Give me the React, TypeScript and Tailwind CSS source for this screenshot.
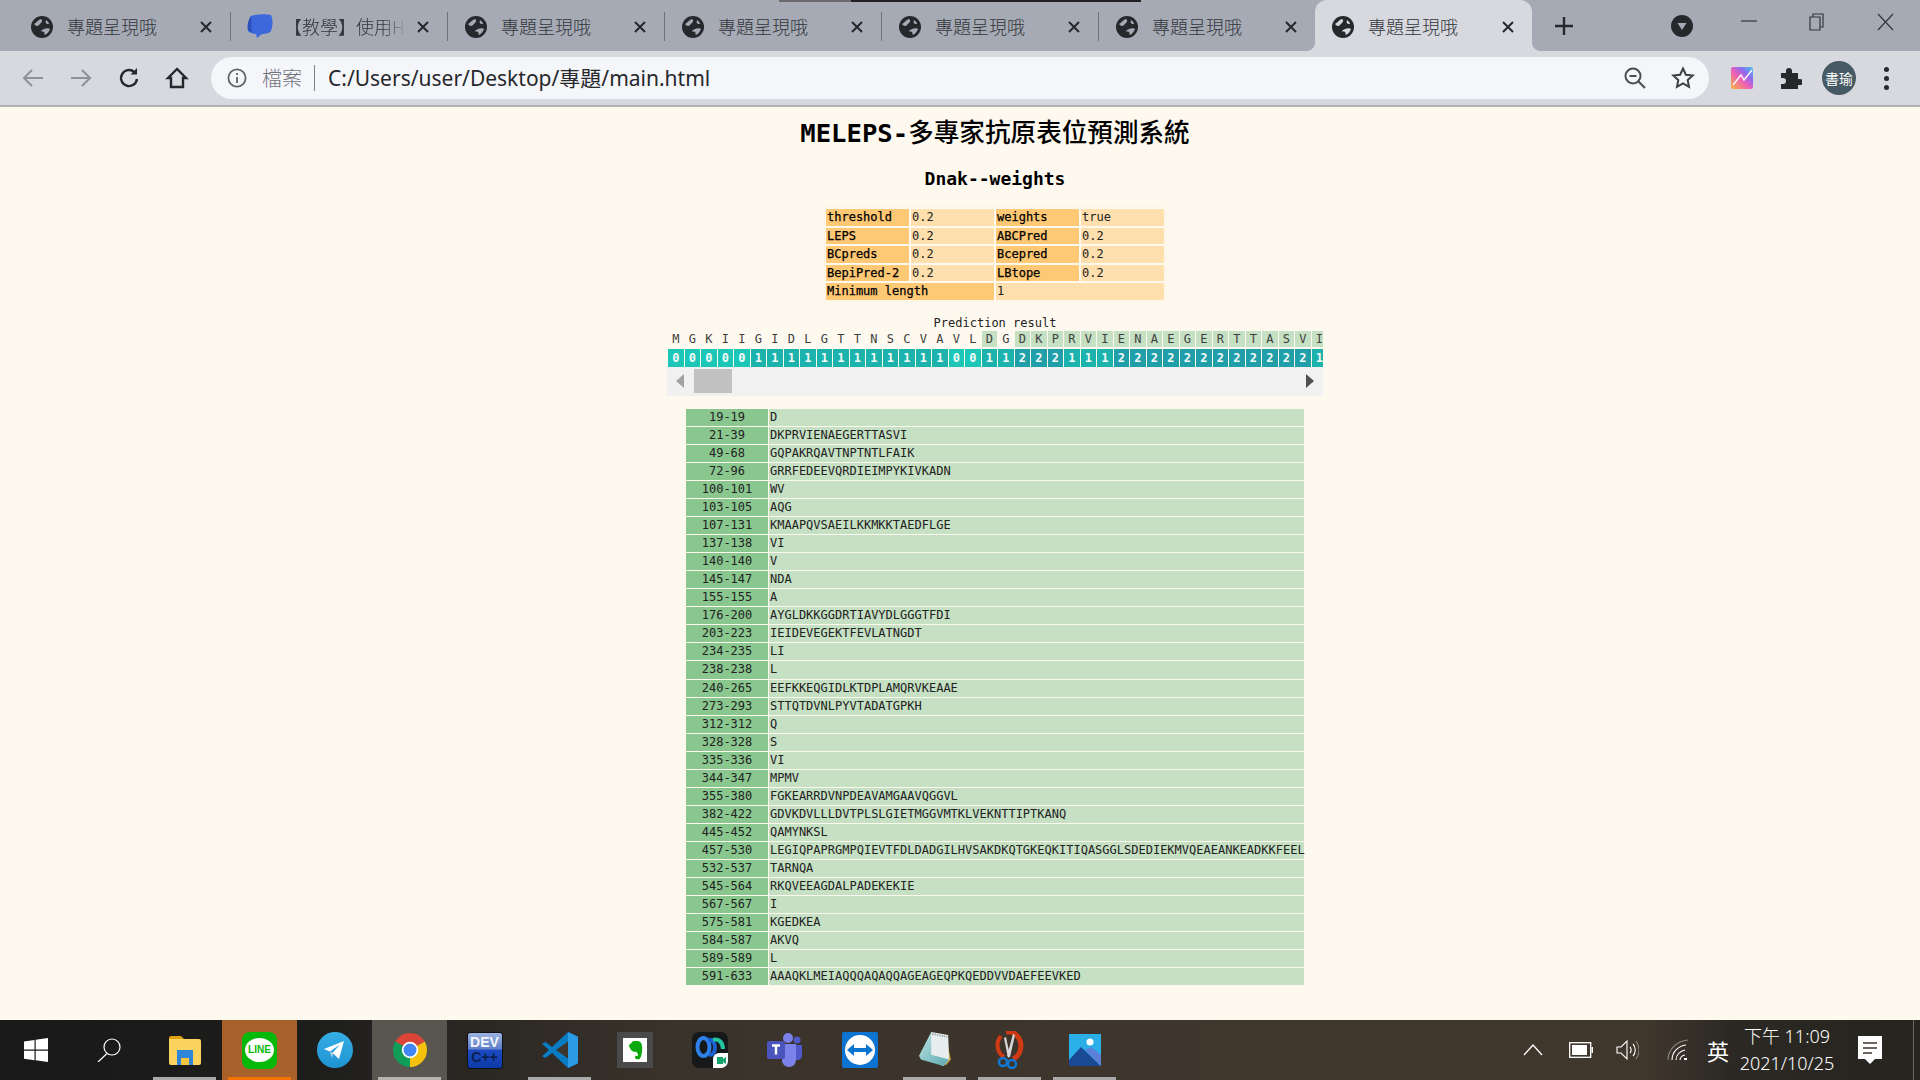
import React from "react";

const SEQ = "MGKIIGIDLGTTNSCVAVLDGDKPRVIENAEGERTTASVI".split("");
const SCORES = "0000011111111111100112221112222222222221".split("");
const GREEN = new Set([19, ...Array.from({ length: 19 }, (_, i) => i + 21)]);
const ROWS: [string, string][] = [
  ["19-19", "D"], ["21-39", "DKPRVIENAEGERTTASVI"], ["49-68", "GQPAKRQAVTNPTNTLFAIK"], ["72-96", "GRRFEDEEVQRDIEIMPYKIVKADN"],
  ["100-101", "WV"], ["103-105", "AQG"], ["107-131", "KMAAPQVSAEILKKMKKTAEDFLGE"], ["137-138", "VI"], ["140-140", "V"],
  ["145-147", "NDA"], ["155-155", "A"], ["176-200", "AYGLDKKGGDRTIAVYDLGGGTFDI"], ["203-223", "IEIDEVEGEKTFEVLATNGDT"],
  ["234-235", "LI"], ["238-238", "L"], ["240-265", "EEFKKEQGIDLKTDPLAMQRVKEAAE"], ["273-293", "STTQTDVNLPYVTADATGPKH"],
  ["312-312", "Q"], ["328-328", "S"], ["335-336", "VI"], ["344-347", "MPMV"], ["355-380", "FGKEARRDVNPDEAVAMGAAVQGGVL"],
  ["382-422", "GDVKDVLLLDVTPLSLGIETMGGVMTKLVEKNTTIPTKANQ"], ["445-452", "QAMYNKSL"],
  ["457-530", "LEGIQPAPRGMPQIEVTFDLDADGILHVSAKDKQTGKEQKITIQASGGLSDEDIEKMVQEAEANKEADKKFEEL"], ["532-537", "TARNQA"],
  ["545-564", "RKQVEEAGDALPADEKEKIE"], ["567-567", "I"], ["575-581", "KGEDKEA"], ["584-587", "AKVQ"], ["589-589", "L"],
  ["591-633", "AAAQKLMEIAQQQAQAQQAGEAGEQPKQEDDVVDAEFEEVKED"],
];
const PARAMS = [
  ["threshold", "0.2", "weights", "true"],
  ["LEPS", "0.2", "ABCPred", "0.2"],
  ["BCpreds", "0.2", "Bcepred", "0.2"],
  ["BepiPred-2", "0.2", "LBtope", "0.2"],
];

function Globe({ active }: { active?: boolean }) {
  return (
    <svg viewBox="0 0 22 22" className="w-[22px] h-[22px] shrink-0">
      <circle cx="11" cy="11" r="11" fill="#26282c" />
      <path d="M3 8c2-1 4-4 7-5 2 1 1 3 0 4-2 1-2 3-4 3-1 0-2-1-3-2zM13 13c2-1 5-1 6 0-1 3-3 5-5 6-1-1 0-2-1-3-1-1-3 0-3-1 0-1 2-1 3-2zM15 4c1 1 3 2 3 4-1 0-3 0-3-1-1-1 0-2 0-3z" fill={active ? "#d8d9df" : "#a6aab5"} />
    </svg>
  );
}
function CloseX() {
  return (
    <svg viewBox="0 0 14 14" className="w-[14px] h-[14px] shrink-0">
      <path d="M2 2l10 10M12 2L2 12" stroke="#26282c" strokeWidth="2" />
    </svg>
  );
}
function Bubble() {
  return (
    <svg viewBox="0 0 26 25" className="w-[26px] h-[25px] shrink-0 ml-[-1px] mr-[-3px]">
      <path d="M4 2c6-2 15-2 20-1 2 4 2 11 0 16-1 2-5 3-9 3l-5 4-1-4c-3 0-6-1-8-3C0 12 1 6 4 2z" fill="#3c68dc" />
      <path d="M1 16C0 10 2 6 4 2c1 4 0 11 1 16-2 0-3-1-4-2z" fill="#2b50ba" />
    </svg>
  );
}
function Tab({ title, bubble, sep, fade }: { title: string; bubble?: boolean; sep?: boolean; fade?: boolean }) {
  return (
    <>
      <div className="w-[216px] h-[51px] pt-[2px] pl-[17px] pr-[17px] flex items-center shrink-0">
        {bubble ? <Bubble /> : <Globe />}
        <div className={`flex-1 min-w-0 ml-[14px] mr-[9px] mb-[2px] overflow-hidden whitespace-nowrap text-[18px] leading-[24px] text-[#33363c] font-light ${fade ? "[mask-image:linear-gradient(to_right,black_80%,transparent)]" : ""}`}>
          {title}
        </div>
        <CloseX />
      </div>
      {sep ? <div className="w-px h-[29px] mt-[12px] bg-[#6f727b] shrink-0" /> : null}
    </>
  );
}

function TabBar() {
  return (
    <div className="relative h-[51px] bg-[#a6aab5] flex pl-[14px] font-['Noto_Sans_CJK_TC','Noto_Sans',sans-serif]">
      <div className="absolute top-0 left-[779px] w-[72px] h-[2px] bg-[#6b6b6e]" />
      <div className="absolute top-0 left-[851px] w-[290px] h-[2px] bg-[#222225]" />
      <Tab title="專題呈現哦" sep />
      <Tab title="【教學】使用HTML" bubble sep fade />
      <Tab title="專題呈現哦" sep />
      <Tab title="專題呈現哦" sep />
      <Tab title="專題呈現哦" sep />
      <Tab title="專題呈現哦" />
      <div className="relative w-[217px] h-[51px] pt-[2px] pl-[17px] pr-[17px] flex items-center shrink-0 bg-[#d8d9df] rounded-t-[12px]">
        <svg viewBox="0 0 8 8" className="absolute bottom-0 left-[-8px] w-[8px] h-[8px]"><path d="M8 0v8H0c4 0 8-4 8-8z" fill="#d8d9df" /></svg>
        <svg viewBox="0 0 8 8" className="absolute bottom-0 right-[-8px] w-[8px] h-[8px]"><path d="M0 0v8h8C4 8 0 4 0 0z" fill="#d8d9df" /></svg>
        <Globe active />
        <div className="flex-1 ml-[14px] mb-[2px] text-[18px] leading-[24px] text-[#33363c] font-light whitespace-nowrap">專題呈現哦</div>
        <CloseX />
      </div>
      <svg viewBox="0 0 20 20" className="w-[20px] h-[20px] ml-[22px] mt-[16px] shrink-0">
        <path d="M10 1v18M1 10h18" stroke="#26282c" strokeWidth="2.4" />
      </svg>
      <div className="flex-1" />
      <svg viewBox="0 0 22 22" className="w-[22px] h-[22px] mt-[15px] mr-[22px] shrink-0">
        <circle cx="11" cy="11" r="11" fill="#26282c" />
        <path d="M6.5 8h9L11 15z" fill="#a6aab5" />
      </svg>
      {[
        <path key="a" d="M0 8h16" stroke="#33363c" strokeWidth="1.2" />,
        <g key="b" fill="none" stroke="#33363c" strokeWidth="1.2"><path d="M1 4h10v13H1z" /><path d="M4 4V1h10v13h-3" /></g>,
        <path key="c" d="M1 1l15 16M16 1L1 17" stroke="#33363c" strokeWidth="1.2" fill="none" />,
      ].map((p, i) => (
        <div key={i} className="w-[68px] h-[44px] flex items-center justify-center shrink-0">
          <svg viewBox="0 0 17 18" className="w-[17px] h-[18px]">{p}</svg>
        </div>
      ))}
      <div className="w-px" />
    </div>
  );
}

function ToolBtn({ children }: { children: React.ReactNode }) {
  return <div className="w-[48px] h-[42px] flex items-center justify-center shrink-0">{children}</div>;
}

function Toolbar() {
  return (
    <div className="h-[56px] bg-[#d8d9df] border-b-2 border-[#b0b1b6] flex items-center pl-[9px] font-['Noto_Sans','Noto_Sans_CJK_TC',sans-serif]">
      <ToolBtn><svg viewBox="0 0 24 24" className="w-[24px] h-[24px]" fill="none" stroke="#8f9196" strokeWidth="2"><path d="M22 12H3M11 4l-8 8 8 8" /></svg></ToolBtn>
      <ToolBtn><svg viewBox="0 0 24 24" className="w-[24px] h-[24px]" fill="none" stroke="#8f9196" strokeWidth="2"><path d="M2 12h19M13 4l8 8-8 8" /></svg></ToolBtn>
      <ToolBtn><svg viewBox="0 0 24 24" className="w-[24px] h-[24px]" fill="none" stroke="#26282c" strokeWidth="2.4"><path d="M20 13a8 8 0 1 1-2.600-6.900" /><path d="M20 2v6.500h-6.500" fill="#26282c" stroke="none" /></svg></ToolBtn>
      <ToolBtn><svg viewBox="0 0 24 24" className="w-[24px] h-[24px]" fill="none" stroke="#26282c" strokeWidth="2.4"><path d="M12 3L3 12h3v9h12v-9h3z" /></svg></ToolBtn>
      <div className="w-[1498px] ml-[10px] h-[42px] rounded-full bg-[#f5f6fa] flex items-center pl-[16px] pr-[14px]">
        <svg viewBox="0 0 20 20" className="w-[20px] h-[20px] shrink-0" fill="none" stroke="#5f6368" strokeWidth="1.8">
          <circle cx="10" cy="10" r="8.600" /><path d="M10 9v6M10 5v2" />
        </svg>
        <span className="ml-[15px] text-[20px] leading-[26px] text-[#70737a] font-light font-['Noto_Sans_CJK_TC',sans-serif]">檔案</span>
        <div className="w-px h-[26px] bg-[#7d8086] ml-[12px] mr-[13px]" />
        <span className="text-[21px] leading-[26px] text-[#26282c] whitespace-nowrap">C:/Users/user/Desktop/專題/main.html</span>
        <div className="flex-1" />
        <svg viewBox="0 0 24 24" className="w-[24px] h-[24px] shrink-0 mr-[24px]" fill="none" stroke="#4a4d52" strokeWidth="2">
          <circle cx="10" cy="10" r="7.500" /><path d="M15.500 15.500L22 22M6.500 10h7" />
        </svg>
        <svg viewBox="0 0 24 24" className="w-[24px] h-[24px] shrink-0" fill="none" stroke="#3c3f44" strokeWidth="2">
          <path d="M12 2.500l2.900 6.200 6.800.8-5 4.600 1.300 6.700-6-3.400-6 3.400 1.300-6.700-5-4.600 6.800-.8z" />
        </svg>
      </div>
      <div className="w-[21px]" />
      <svg viewBox="0 0 24 24" className="w-[24px] h-[24px] shrink-0 mr-[24px]">
        <defs><linearGradient id="ext" x1="0" y1="1" x2="1" y2="0"><stop offset="0" stopColor="#f7b13a" /><stop offset="0.45" stopColor="#ef5fb8" /><stop offset="0.7" stopColor="#8a6cf0" /><stop offset="1" stopColor="#45c8e8" /></linearGradient></defs>
        <rect x="1" y="1" width="22" height="22" rx="2" fill="url(#ext)" />
        <path d="M3 19L11 9l3 5 8-10" stroke="#fff" strokeWidth="1.300" fill="none" />
      </svg>
      <svg viewBox="0 0 24 24" className="w-[24px] h-[24px] shrink-0 mr-[20px]">
        <path d="M3 7h5V5a3 3 0 0 1 6 0v2h6v6h2a3 3 0 0 1 0 6h-2v4H3v-5h2a3 3 0 0 0 0-6H3z" fill="#26282c" />
      </svg>
      <div className="w-[34px] h-[34px] rounded-full bg-[#455a64] shrink-0 flex items-center justify-center text-white text-[14px] leading-none whitespace-nowrap font-['Noto_Sans_CJK_TC',sans-serif]">書瑜</div>
      <div className="ml-[28px] flex flex-col gap-[4px]">
        <div className="w-[5px] h-[5px] rounded-full bg-[#26282c]" />
        <div className="w-[5px] h-[5px] rounded-full bg-[#26282c]" />
        <div className="w-[5px] h-[5px] rounded-full bg-[#26282c]" />
      </div>
    </div>
  );
}

function Page() {
  return (
    <div className="flex-1 min-h-0 overflow-hidden bg-[#fef9ef] pl-[70px] flex flex-col items-center text-[12px] leading-[16px] text-[#222] font-['DejaVu_Sans_Mono','Noto_Sans_CJK_TC',monospace]">
      <div className="h-[51px] flex items-center text-[25.6px] text-black whitespace-nowrap">
        <span className="font-bold">MELEPS-</span>
        <span className="font-medium">多專家抗原表位預測系統</span>
      </div>
      <div className="h-[42px] flex items-center text-[18px] font-bold text-black whitespace-nowrap">Dnak--weights</div>
      <div className="mt-[7px] w-[342px] p-px border border-[#fff4e2] flex flex-col gap-[2px]">
        {PARAMS.map((r, i) => (
          <div key={i} className="grid grid-cols-4 gap-[2px] h-[16.6px]">
            {r.map((c, j) => (
              <div key={j} className={`pl-px leading-[16.6px] ${j % 2 === 0 ? "bg-[#ffc875] text-black [-webkit-text-stroke:0.25px_black]" : "bg-[#ffdfad] text-[#222]"}`}>{c}</div>
            ))}
          </div>
        ))}
        <div className="grid grid-cols-2 gap-[2px] h-[16.6px]">
          <div className="pl-px leading-[16.6px] bg-[#ffc875] text-black [-webkit-text-stroke:0.25px_black]">Minimum length</div>
          <div className="pl-px leading-[16.6px] bg-[#ffdfad] text-[#222]">1</div>
        </div>
      </div>
      <div className="mt-[13px] h-[16px] text-center whitespace-nowrap">Prediction result</div>
      <div className="w-[656px] overflow-hidden">
        <div className="flex gap-px h-[16px] pl-px">
          {SEQ.map((c, i) => (
            <div key={i} className={`w-[15.5px] shrink-0 text-center leading-[16px] text-[#3f3f3f] ${GREEN.has(i) ? "bg-[#c6e0c3]" : ""}`}>{c}</div>
          ))}
        </div>
        <div className="flex gap-px h-[18px] mt-[2px] pl-px">
          {SCORES.map((c, i) => (
            <div key={i} className={`w-[15.5px] shrink-0 text-center leading-[18px] font-bold text-[#f4fbfa] ${c === "0" ? "bg-[#1cc7b7]" : c === "1" ? "bg-[#1bb3ab]" : "bg-[#209fa9]"}`}>{c}</div>
          ))}
        </div>
        <div className="h-[29px] bg-[#f1f1f1] flex items-center pl-[9px] pr-[9px]">
          <svg viewBox="0 0 8 14" className="w-[8px] h-[14px] shrink-0"><path d="M8 0v14L0 7z" fill="#a3a3a3" /></svg>
          <div className="ml-[10px] w-[38px] h-[24px] bg-[#c1c1c1]" />
          <div className="flex-1" />
          <svg viewBox="0 0 8 14" className="w-[8px] h-[14px] shrink-0"><path d="M0 0v14l8-7z" fill="#505050" /></svg>
        </div>
      </div>
      <div className="mt-[13.3px] w-[618px] flex flex-col gap-px">
        {ROWS.map(([a, b]) => (
          <div key={a} className="flex gap-px h-[17.03px]">
            <div className="w-[82px] shrink-0 bg-[#8ac78f] text-center leading-[17px]">{a}</div>
            <div className="flex-1 min-w-0 bg-[#c6e0c3] pl-px leading-[17px] whitespace-nowrap">{b}</div>
          </div>
        ))}
      </div>
    </div>
  );
}

const Task = ({ children, w = "w-[75px]", bar, bg }: { children: React.ReactNode; w?: string; bar?: string; bg?: string }) => (
  <div className={`relative ${w} h-[60px] flex items-center justify-center shrink-0 ${bg || ""}`}>
    {children}
    {bar ? <div className={`absolute bottom-0 left-[6px] right-[6px] h-[3px] ${bar}`} /> : null}
  </div>
);

function Taskbar() {
  return (
    <div className="h-[60px] flex bg-[linear-gradient(to_right,#191919_0%,#1d1d1c_16%,#3a332b_35%,#40372d_70%,#3f362c_86%,#2c2925_90%,#26241f_100%)] text-white font-['Noto_Sans','Noto_Sans_CJK_TC',sans-serif]">
      <Task w="w-[71px]">
        <svg viewBox="0 0 24 24" className="w-[24px] h-[24px]"><path d="M0 3.500l10.500-1.500v9.500H0zM11.700 1.800L24 0v11.500H11.700zM0 12.700h10.500v9.500L0 20.700zM11.700 12.700H24V24l-12.300-1.800z" fill="#fff" /></svg>
      </Task>
      <Task w="w-[76px]">
        <svg viewBox="0 0 24 24" className="w-[24px] h-[24px]" fill="none" stroke="#fff" strokeWidth="1.200"><circle cx="15" cy="9" r="8" /><path d="M10 15.500L1 24" /></svg>
      </Task>
      <Task bar="bg-[#a9a9a9]">
        <svg viewBox="0 0 32 30" className="w-[32px] h-[30px]">
          <path d="M0 3a2 2 0 0 1 2-2h10l3 3h-15z" fill="#e0a010" />
          <path d="M0 4h30a2 2 0 0 1 2 2v22a2 2 0 0 1-2 2H2a2 2 0 0 1-2-2z" fill="#fbd35e" />
          <path d="M8 15h16v15h-4v-7h-8v7H8z" fill="#2f86d8" />
          <rect x="12" y="23" width="8" height="7" fill="#f5c542" />
        </svg>
      </Task>
      <Task bg="bg-[#a8612a]" bar="bg-[#f57200]">
        <div className="w-[35px] h-[37px] rounded-[8px] bg-[#06b80a] flex items-center justify-center">
          <div className="w-[29px] h-[24px] rounded-[50%] bg-white flex items-center justify-center text-[10px] font-bold leading-none text-[#06b80a] font-['Liberation_Sans',sans-serif]">LINE</div>
        </div>
      </Task>
      <Task>
        <svg viewBox="0 0 36 36" className="w-[36px] h-[36px]">
          <defs><linearGradient id="tg" x1="0" y1="0" x2="0" y2="1"><stop offset="0" stopColor="#38aee6" /><stop offset="1" stopColor="#1d93d2" /></linearGradient></defs>
          <circle cx="18" cy="18" r="18" fill="url(#tg)" />
          <path d="M27 9L7 17l6 2.500 10-7-7.500 8.500 6.500 6z" fill="#fff" />
          <path d="M13 19.500l2 6.500 1-5z" fill="#c8daea" />
        </svg>
      </Task>
      <Task bg="bg-[#59564f]" bar="bg-[#b5b3ad]">
        <svg viewBox="0 0 36 36" className="w-[36px] h-[36px]">
          <path d="M18 18L3.300 9.500A17 17 0 0 1 32.700 9.500z" fill="#db4437" />
          <path d="M18 18L32.700 9.500A17 17 0 0 1 18 35z" fill="#f4c20d" />
          <path d="M18 18L18 35A17 17 0 0 1 3.300 9.500z" fill="#0f9d58" />
          <circle cx="18" cy="18" r="8.200" fill="#fff" />
          <circle cx="18" cy="18" r="6.500" fill="#4285f4" />
        </svg>
      </Task>
      <Task>
        <div className="w-[36px] h-[37px] rounded-[3px] border border-[#111] bg-[linear-gradient(to_bottom,#9db3e0_0%,#5f7fcc_45%,#1c49c0_50%,#0d3aa8_100%)] flex flex-col items-center justify-center text-[14px] font-bold leading-[15px] font-['Liberation_Sans',sans-serif]">
          <span className="text-[#f4f6fb]">DEV</span>
          <span className="text-[#0c1f52]">C++</span>
        </div>
      </Task>
      <Task bar="bg-[#a9a9a9]">
        <svg viewBox="0 0 36 36" className="w-[36px] h-[36px]">
          <path d="M26 0l10 4.800v26.400L26 36 10 21l-6.500 5L0 24.200 7 18 0 11.800 3.500 10 10 15z" fill="#0a7cc4" />
          <path d="M26 9.500L14 18l12 8.500z" fill="#3c3630" />
          <path d="M26 0l10 4.800v26.400L26 36z" fill="#2b9be6" />
        </svg>
      </Task>
      <Task>
        <div className="w-[36px] h-[36px] bg-[#4a4a4a] flex items-center justify-center">
          <div className="w-[24px] h-[24px] bg-white flex items-center justify-center">
            <svg viewBox="0 0 20 24" className="w-[18px] h-[22px]"><path d="M3 7l5-5h6c3 1 4 4 4 8 0 5-1 10-3 12-2 1-5 0-5-2 0-2 3-2 3-1 1-3-1-5-3-5-4 0-5-3-7-7z" fill="#0da80e" /></svg>
          </div>
        </div>
      </Task>
      <Task>
        <svg viewBox="0 0 36 36" className="w-[36px] h-[36px]">
          <rect width="36" height="36" rx="7" fill="#15191a" />
          <ellipse cx="11.500" cy="15" rx="6" ry="9" fill="none" stroke="#2f7fe8" strokeWidth="4" />
          <path d="M17 22c3 2 6-1 6-7 0-4-3-8-7-7" fill="none" stroke="#1c5fd0" strokeWidth="4" />
          <path d="M21 8c5-2 10 2 10 9" fill="none" stroke="#22c4a0" strokeWidth="4" />
          <path d="M21 27a6 6 0 0 1 6-6h9v8a7 7 0 0 1-7 7h-8z" fill="#fff" />
          <path d="M25 25h6v2l3-2v7l-3-2v2h-6z" fill="#13a36b" />
        </svg>
      </Task>
      <Task>
        <svg viewBox="0 0 36 36" className="w-[36px] h-[36px]">
          <circle cx="21" cy="6" r="5" fill="#7b83eb" /><circle cx="30" cy="8" r="3.500" fill="#5059c9" />
          <path d="M15 12h14v15c0 5-3 8-7 8s-7-3-7-7z" fill="#7b83eb" />
          <path d="M29 13h6v10c0 3-2 5-5 5h-1z" fill="#5059c9" />
          <rect y="9" width="18" height="18" rx="2" fill="#4b53bc" />
          <path d="M5 13.500h8M9 13.500v9" stroke="#fff" strokeWidth="2.400" />
        </svg>
      </Task>
      <Task>
        <svg viewBox="0 0 36 36" className="w-[36px] h-[36px]">
          <rect width="36" height="36" rx="2" fill="#0e74d2" />
          <circle cx="18" cy="18" r="15" fill="#fff" />
          <path d="M5 18l7-6v4h12v-4l7 6-7 6v-4H12v4z" fill="#0e74d2" />
        </svg>
      </Task>
      <Task bar="bg-[#a9a9a9]">
        <svg viewBox="0 0 34 38" className="w-[32px] h-[36px]">
          <defs><linearGradient id="np" x1="0" y1="0" x2="1" y2="1"><stop offset="0" stopColor="#bfe6e4" /><stop offset="1" stopColor="#5aa8b0" /></linearGradient></defs>
          <path d="M28 4l6 25-6 7z" fill="#c59a3a" />
          <path d="M13 0l18 3 1 26-6 7-17-7z" fill="#e8eeee" />
          <path d="M13 0L0 25l2 4 24 7 6-7-19-5z" fill="url(#np)" />
          <path d="M14 2l16 3" stroke="#9aa" strokeWidth="2" strokeDasharray="1.500 1" />
        </svg>
      </Task>
      <Task bar="bg-[#a9a9a9]">
        <svg viewBox="0 0 32 38" className="w-[32px] h-[38px]">
          <path d="M12 1a13 14 0 0 1 15 13c0 8-4 12-8 14" fill="none" stroke="#d03a12" strokeWidth="5" />
          <path d="M7 5a14 14 0 0 0 3 21" fill="none" stroke="#d03a12" strokeWidth="4" />
          <path d="M19 3l2 1-5 22-3-1zM12 6l4 19-2 2-4-20z" fill="#d9d9d9" />
          <circle cx="9" cy="31" r="4" fill="none" stroke="#0f78d4" strokeWidth="2.500" />
          <circle cx="18" cy="33" r="4" fill="none" stroke="#0f78d4" strokeWidth="2.500" />
        </svg>
      </Task>
      <Task bar="bg-[#a9a9a9]">
        <svg viewBox="0 0 32 32" className="w-[32px] h-[32px]">
          <rect width="32" height="32" fill="#2bafe8" />
          <circle cx="21" cy="8" r="3.500" fill="#fff" />
          <path d="M0 26l12-13 20 19H0z" fill="#1a4a94" />
          <path d="M16 16l6-3 10 8v11z" fill="#5c7fd8" />
        </svg>
      </Task>
      <div className="flex-1" />
      <div className="flex items-center shrink-0">
        <svg viewBox="0 0 20 12" className="w-[20px] h-[12px] mr-[26px]" fill="none" stroke="#fff" strokeWidth="1.300"><path d="M1 11l9-10 9 10" /></svg>
        <svg viewBox="0 0 24 16" className="w-[24px] h-[16px] mr-[22px]"><rect x=".7" y=".7" width="21" height="14.600" fill="none" stroke="#fff" strokeWidth="1.300" /><rect x="3" y="3" width="15" height="10" fill="#fff" /><rect x="22.500" y="5" width="1.500" height="6" fill="#fff" /></svg>
        <svg viewBox="0 0 24 24" className="w-[24px] h-[24px] mr-[27px]" fill="none" stroke="#fff" strokeWidth="1.100"><path d="M2 9h4l6-6v18l-6-6H2z" /><path d="M15 9c1.500 1.500 1.500 4.500 0 6M18 6c3 3 3 9 0 12" /><path d="M21 3c4 5 4 13 0 18" stroke="#8a8478" /></svg>
        <svg viewBox="0 0 24 24" className="w-[24px] h-[24px] mr-[17px]" fill="none" stroke="#fff" strokeWidth="1.100"><path d="M2 22C2 12 10 3 22 2" stroke="#8a8a80" /><path d="M6 22c0-8 6-14 14-15" /><path d="M10 22c0-5 4-9 9-10" /><path d="M14 22c0-2 2-5 5-5" /><rect x="18" y="20" width="3" height="2" fill="#fff" stroke="none" /></svg>
        <span className="text-[22px] leading-none font-['Noto_Sans_CJK_TC',sans-serif] mr-[6px]">英</span>
        <div className="w-[104px] flex flex-col items-center text-[18px] leading-[27px] font-light font-['Noto_Sans','Noto_Sans_CJK_TC',sans-serif]">
          <span className="whitespace-nowrap">下午 11:09</span>
          <span className="whitespace-nowrap">2021/10/25</span>
        </div>
        <div className="w-[62px] flex items-center justify-center">
          <svg viewBox="0 0 24 28" className="w-[24px] h-[28px]"><path d="M0 0h24v23h-7l-5 5-5-5H0z" fill="#fff" /><path d="M5 7h14M5 12h14M5 17h9" stroke="#3f362c" strokeWidth="1.500" /></svg>
        </div>
        <div className="w-[12px]" />
        <div className="w-px h-[60px] bg-[#6c665c] mr-[6px]" />
      </div>
    </div>
  );
}

export default function App() {
  return (
    <div className="w-[1920px] h-[1080px] overflow-hidden flex flex-col">
      <TabBar />
      <Toolbar />
      <Page />
      <Taskbar />
    </div>
  );
}
